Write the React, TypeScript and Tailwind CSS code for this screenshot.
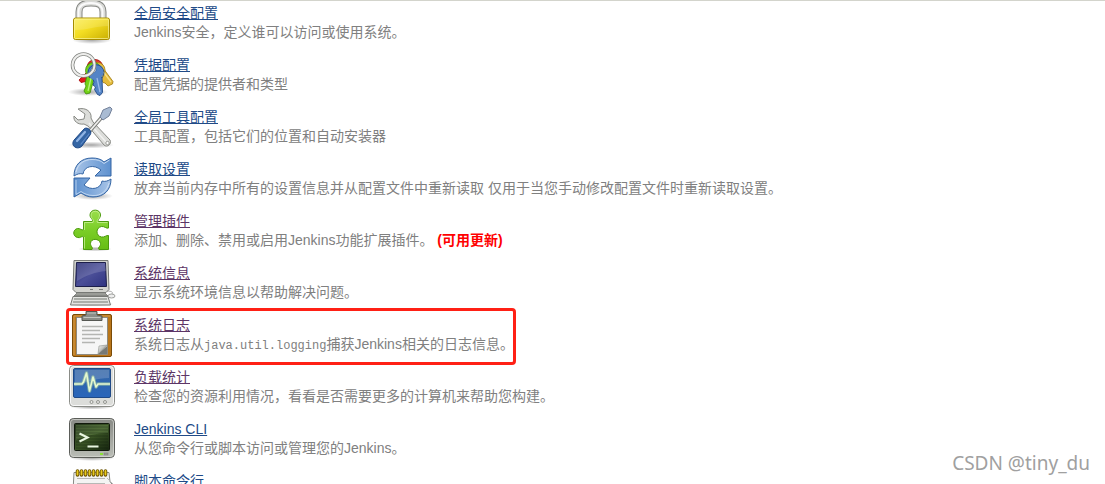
import React from 'react';

interface ManageLink {
  title: string;
  href: string;
  icon: React.ReactNode;
  description?: React.ReactNode;
  visited?: boolean;
  highlighted?: boolean;
}

function Icon({ children }: { children: React.ReactNode }) {
  return (
    <svg viewBox="0 0 48 48" className="size-12 shrink-0" aria-hidden="true">
      {children}
    </svg>
  );
}

function LockIcon() {
  return (
    <Icon>
      <defs>
        <linearGradient id="lockBody" x1="0" y1="0" x2="1" y2="1">
          <stop offset="0" stopColor="#fbee5a" />
          <stop offset="0.45" stopColor="#f3dd22" />
          <stop offset="1" stopColor="#c9ae00" />
        </linearGradient>
        <radialGradient id="shade">
          <stop offset="0" stopColor="#000" stopOpacity="0.35" />
          <stop offset="1" stopColor="#000" stopOpacity="0" />
        </radialGradient>
      </defs>
      <ellipse cx="24" cy="42" rx="20" ry="4" fill="url(#shade)" />
      <path d="M11 23V14C11 7 15 5 23 5s12 2 12 9v9" fill="none" stroke="#858783" strokeWidth="7" />
      <path d="M11 23V14C11 7 15 5 23 5s12 2 12 9v9" fill="none" stroke="#d9dad7" strokeWidth="5" />
      <path d="M10.5 22V14C10.5 8 15 5 23 5s11.500 3 11.500 9v8" fill="none" stroke="#fafafa" strokeWidth="2" />
      <rect x="5.5" y="20" width="36" height="21.500" rx="2" fill="url(#lockBody)" stroke="#a68c00" />
      <rect x="6.5" y="21" width="34" height="19.500" rx="1" fill="none" stroke="#fffbb0" strokeOpacity="0.6" />
      <path d="M7 21h33v7C28 28 20 32 7 32z" fill="#fff" fillOpacity="0.15" />
    </Icon>
  );
}

function KeysIcon() {
  return (
    <Icon>
      <ellipse cx="20" cy="42" rx="20" ry="4" fill="url(#shade)" />
      <path d="M18 23l-7 7 2 2.500 5-1 5-4z" fill="#e01b1b" stroke="#a40000" strokeWidth="0.8" />
      <circle cx="27" cy="17.500" r="8" fill="#e03a2c" stroke="#a40000" strokeWidth="0.8" />
      <path d="M35 18l10 13.500-.500 2.500-4.500 2-3-3-2-.500-5-9z" fill="#e4bb3b" stroke="#a07a10" strokeWidth="0.8" />
      <circle cx="29.500" cy="20" r="7.500" fill="#e9c040" stroke="#a07a10" strokeWidth="0.8" />
      <path d="M35.500 22l7.500 10" stroke="#f8e08a" strokeWidth="1.300" />
      <path d="M19 25l-2 9 1 2-2 5 2 3 4-1 4-14z" fill="#73d216" stroke="#3d8b07" strokeWidth="0.8" />
      <circle cx="25.500" cy="20.500" r="8" fill="#73d216" stroke="#3d8b07" strokeWidth="0.8" />
      <path d="M23 28l-3 13" stroke="#b6f17c" strokeWidth="1.300" />
      <path d="M24 27l2 5-1 3 2.500 2-1 2.500 3 5 2.500 1 2.500-3-.500-15z" fill="#5484c6" stroke="#204a87" strokeWidth="0.9" />
      <circle cx="27.500" cy="22" r="8" fill="#5484c6" />
      <path d="M22 28a8 8 0 1 1 12 0" fill="none" stroke="#204a87" strokeWidth="0.9" />
      <path d="M29 28l3 14" stroke="#9bbbea" strokeWidth="1.300" />
      <circle cx="25.500" cy="20" r="2.500" fill="#fff" stroke="#204a87" strokeWidth="0.6" />
      <circle cx="15.500" cy="15" r="11" fill="none" stroke="#858783" strokeWidth="3.600" />
      <circle cx="15.500" cy="15" r="11" fill="none" stroke="#eeeeec" strokeWidth="1.900" />
    </Icon>
  );
}

function ToolsIcon() {
  return (
    <Icon>
      <ellipse cx="23" cy="43" rx="23" ry="3.500" fill="url(#shade)" />
      <path
        d="M10 7l7 5-1 5-6 1-4-4c-1 5 4 9 10 8l4 2 16 19c3 3 8-1 6-5L25 20l-2-4c1-6-5-11-13-9z"
        fill="#dcddda"
        stroke="#888a85"
        strokeLinejoin="round"
      />
      <path d="M21 21l17 19" stroke="#f2f2f1" strokeWidth="1.500" />
      <circle cx="39.500" cy="41" r="1.700" fill="#fff" stroke="#888a85" strokeWidth="0.8" />
      <path d="M20 31l14-16" stroke="#777975" strokeWidth="3.600" />
      <path d="M20 31l14-16" stroke="#eeeeec" strokeWidth="1.800" />
      <path d="M32 15l3-7 7-3 2 2-3 7-6 4z" fill="#a9bbd3" stroke="#728099" strokeLinejoin="round" />
      <path d="M7 37l9-10c3-3 9 2 6 6l-8 11c-5 5-13-1-7-7z" fill="#3465a4" stroke="#204a87" />
      <path d="M9 39l8-9" stroke="#8fb3e4" strokeWidth="2.200" strokeLinecap="round" />
      <path d="M13 42l8-10" stroke="#5f8bc9" strokeWidth="1.200" strokeLinecap="round" />
    </Icon>
  );
}

function ReloadIcon() {
  return (
    <Icon>
      <defs>
        <linearGradient id="reloadTop" x1="0" y1="0" x2="1" y2="0">
          <stop offset="0" stopColor="#a9c5e8" />
          <stop offset="1" stopColor="#5e91cf" />
        </linearGradient>
        <linearGradient id="reloadBottom" x1="0" y1="0" x2="1" y2="0">
          <stop offset="0" stopColor="#5b8fce" />
          <stop offset="1" stopColor="#a9c5e8" />
        </linearGradient>
      </defs>
      <ellipse cx="25" cy="42" rx="20" ry="4" fill="url(#shade)" />
      <path
        d="M6 22C6 11 13 4 24 4c5 0 9 1 12 4l7-4v18H27l6-6c-7-6-17-4-18 4-3-1-6 0-9 2z"
        fill="url(#reloadTop)"
        stroke="#3465a4"
        strokeLinejoin="round"
      />
      <path d="M8 18C10 9 17 5.500 24 5.500c5 0 9 1 12 4l5.500-3.500" fill="none" stroke="#dbe9f9" strokeOpacity="0.8" />
      <path
        d="M43 25c0 11-7 18-18 18-5 0-9-2-12-4l-7 4V24h16l-6 7c7 6 17 4 18-4 3 1 6 0 9-2z"
        fill="url(#reloadBottom)"
        stroke="#3465a4"
        strokeLinejoin="round"
      />
      <path d="M41 29c-2 8-8 13-16 12.500-5 0-9-2-12-4l-5 3V26" fill="none" stroke="#dbe9f9" strokeOpacity="0.7" />
    </Icon>
  );
}

function PuzzleIcon() {
  return (
    <Icon>
      <defs>
        <linearGradient id="puzzle" x1="0" y1="0" x2="0" y2="1">
          <stop offset="0" stopColor="#9bde4c" />
          <stop offset="0.5" stopColor="#7bce28" />
          <stop offset="1" stopColor="#66bd14" />
        </linearGradient>
      </defs>
      <ellipse cx="27" cy="43" rx="17" ry="2.500" fill="url(#shade)" />
      <path
        d="M15.500 15.500H24c2-2-2-3-2-6.500 0-6.500 10.500-6.500 10.500 0 0 3.500-3.500 4.500-2 6.500h10V22c-2 1-4-2-7-1.500-6 1-6 9.500 0 10.500 3 .500 5-2 7-1.500v14H31c-2-2 2-3 1.500-6-1-5.500-10-5.500-10 0 0 3 3 4 1.500 6h-8.500V31c-2-1.500-3 1.500-6 .500-5-1-5-8 0-9 3-.500 4 2.500 6 1z"
        fill="url(#puzzle)"
        stroke="#4b9a0c"
        strokeLinejoin="round"
      />
      <path
        d="M16.500 24v-7.500H25C27 14 23 13 23 9c0-5 8.500-5 8.500 0 0 4-3.500 5-2 7.500h10M16.500 31v11.500"
        fill="none"
        stroke="#d0f5a0"
        strokeOpacity="0.7"
      />
    </Icon>
  );
}

function ComputerIcon() {
  return (
    <Icon>
      <defs>
        <linearGradient id="pcScreen" x1="0" y1="0" x2="1" y2="1">
          <stop offset="0" stopColor="#262a72" />
          <stop offset="0.5" stopColor="#4b4f98" />
          <stop offset="1" stopColor="#2f3380" />
        </linearGradient>
      </defs>
      <ellipse cx="23" cy="46" rx="23" ry="2.500" fill="url(#shade)" />
      <path d="M38 33c8 0 7 2 5 4" fill="none" stroke="#aaa" />
      <path d="M10 34h26l4 4H6z" fill="#9a9c97" stroke="#666864" strokeWidth="0.7" />
      <path d="M6 2.500h34l1 29-3 3H8l-3-3z" fill="#d3d4cf" stroke="#777975" strokeLinejoin="round" />
      <path d="M8.500 4.500h29l1 24H7.500z" fill="url(#pcScreen)" stroke="#1c1e4a" />
      <path d="M9 5h28l1 8c-11 1-19 4-29 10z" fill="#fff" fillOpacity="0.15" />
      <path d="M22 31.500h3M31 31.500h4" stroke="#7b7d79" />
      <path d="M5 38.500h35l2.500 8.500h-40z" fill="#e3e4e1" stroke="#777975" strokeLinejoin="round" />
      <path d="M6 41h33M5 44h35" stroke="#9b9d98" strokeWidth="1.500" />
      <ellipse cx="43.500" cy="38" rx="3.500" ry="2" fill="#eee" stroke="#888a85" strokeWidth="0.8" />
    </Icon>
  );
}

function ClipboardIcon() {
  return (
    <Icon>
      <defs>
        <linearGradient id="paperCurl" x1="0" y1="0" x2="1" y2="1">
          <stop offset="0" stopColor="#fff" />
          <stop offset="0.5" stopColor="#b5b7b3" />
          <stop offset="1" stopColor="#777975" />
        </linearGradient>
      </defs>
      <ellipse cx="24" cy="46" rx="20" ry="2.500" fill="url(#shade)" />
      <rect x="4.500" y="4.500" width="39" height="42" rx="1.500" fill="#b9761a" stroke="#7a4b07" />
      <path d="M6 45V6h36" fill="none" stroke="#d39c4c" />
      <rect x="8.500" y="7.500" width="31" height="37" fill="#f6f6f6" stroke="#7d7e7a" strokeWidth="0.8" />
      <path d="M39 36l-9 8h9z" fill="#777975" />
      <path d="M30 44l1-8 8-1z" fill="url(#paperCurl)" stroke="#8c8e89" strokeWidth="0.6" />
      <path d="M14 16.500h21M14 20.500h18M14 24.500h21M14 28.500h18M14 32.500h13" stroke="#b4b5b2" strokeWidth="1.500" />
      <path d="M14 10.500V6l4-1V1.500h11V5l5 1v4.500z" fill="#8b8d88" stroke="#555753" strokeLinejoin="round" />
      <path d="M15.500 7.500h17M19 3h9" stroke="#c3c5c0" strokeWidth="1.200" />
    </Icon>
  );
}

function MonitorIcon() {
  return (
    <Icon>
      <defs>
        <linearGradient id="loadScreen" x1="0" y1="0" x2="0" y2="1">
          <stop offset="0" stopColor="#3465a4" />
          <stop offset="1" stopColor="#2a66bb" />
        </linearGradient>
      </defs>
      <ellipse cx="24" cy="45" rx="22" ry="2.500" fill="url(#shade)" />
      <rect x="1.500" y="3.500" width="45" height="41" rx="4" fill="#dcddda" stroke="#8a8c87" />
      <rect x="2.500" y="4.500" width="43" height="39" rx="3" fill="none" stroke="#fff" strokeOpacity="0.8" />
      <rect x="5.500" y="6.500" width="37" height="29" rx="1.500" fill="url(#loadScreen)" stroke="#204a87" />
      <path d="M7 8h34v8c-12 0-22 4-34 8z" fill="#fff" fillOpacity="0.18" />
      <path
        d="M6 22h8l1.500-2 3-9 3 18 3.500-14 3 10 2-3h12"
        fill="none"
        stroke="#b5e0a0"
        strokeOpacity="0.5"
        strokeWidth="3.500"
        strokeLinejoin="round"
      />
      <path d="M6 22h8l1.500-2 3-9 3 18 3.500-14 3 10 2-3h12" fill="none" stroke="#e6f8cf" strokeWidth="1.600" strokeLinejoin="round" />
      <g fill="#e9e9e7" stroke="#8a8c87" strokeWidth="0.9">
        <circle cx="23.500" cy="40" r="1.500" />
        <circle cx="30" cy="40" r="1.500" />
        <circle cx="37" cy="40" r="1.500" />
      </g>
    </Icon>
  );
}

function TerminalIcon() {
  return (
    <Icon>
      <defs>
        <linearGradient id="termScreen" x1="0" y1="0" x2="1" y2="1">
          <stop offset="0" stopColor="#22331a" />
          <stop offset="0.5" stopColor="#3a5425" />
          <stop offset="1" stopColor="#172610" />
        </linearGradient>
        <linearGradient id="termCase" x1="0" y1="0" x2="0" y2="1">
          <stop offset="0" stopColor="#888a85" />
          <stop offset="1" stopColor="#babdb6" />
        </linearGradient>
      </defs>
      <ellipse cx="24" cy="44" rx="23" ry="3" fill="url(#shade)" />
      <rect x="1.500" y="4.500" width="45" height="39" rx="4" fill="url(#termCase)" stroke="#5b5d59" />
      <rect x="2.500" y="5.500" width="43" height="37" rx="3" fill="none" stroke="#d3d5cf" strokeOpacity="0.8" />
      <rect x="6.500" y="9.500" width="35" height="27" rx="1" fill="url(#termScreen)" stroke="#11180c" />
      <path d="M8 11h32v8c-12 0-22 3-32 7z" fill="#c4e89a" fillOpacity="0.18" />
      <path d="M8 13h32M8 16h32M8 19h32M8 22h32M8 25h32M8 28h32M8 31h32M8 34h32" stroke="#0b1306" strokeOpacity="0.3" />
      <path d="M11.500 19.500l8 4-8 4M19.500 32.500h11" fill="none" stroke="#e9f6e1" strokeWidth="2.200" />
      <rect x="32" y="39" width="3" height="2" fill="#8ae234" />
      <rect x="36" y="39" width="4" height="2" fill="#9a9c97" stroke="#777975" strokeWidth="0.5" />
    </Icon>
  );
}

function NotepadIcon() {
  return (
    <Icon>
      <path d="M6 6.500h35l1 9 3 4v26H4z" fill="#f4f4f3" stroke="#888a85" />
      <path d="M39 12l7 7" stroke="#bbb" />
      <path d="M9 12.500h28M9 17.500h28M9 21.500h28" stroke="#b7b8b5" />
      <path
        d="M9.500 5v4M13.500 5v4M17.500 5v4M21.500 5v4M25.500 5v4M29.500 5v4M33.500 5v4M37.500 5v4"
        stroke="#6b5300"
        strokeWidth="3.600"
        strokeLinecap="round"
      />
      <path
        d="M9.500 5v3.500M13.500 5v3.500M17.500 5v3.500M21.500 5v3.500M25.500 5v3.500M29.500 5v3.500M33.500 5v3.500M37.500 5v3.500"
        stroke="#e8c91a"
        strokeWidth="1.800"
        strokeLinecap="round"
      />
    </Icon>
  );
}

const links: ManageLink[] = [
  { title: '全局安全配置', href: '#configureSecurity', icon: <LockIcon />, description: 'Jenkins安全，定义谁可以访问或使用系统。' },
  { title: '凭据配置', href: '#configureCredentials', icon: <KeysIcon />, description: '配置凭据的提供者和类型' },
  { title: '全局工具配置', href: '#configureTools', icon: <ToolsIcon />, description: '工具配置，包括它们的位置和自动安装器' },
  {
    title: '读取设置',
    href: '#reload',
    icon: <ReloadIcon />,
    description: '放弃当前内存中所有的设置信息并从配置文件中重新读取 仅用于当您手动修改配置文件时重新读取设置。',
  },
  {
    title: '管理插件',
    href: '#pluginManager',
    icon: <PuzzleIcon />,
    visited: true,
    description: (
      <>
        添加、删除、禁用或启用Jenkins功能扩展插件。 <strong className="font-bold text-[#ff0000]">(可用更新)</strong>
      </>
    ),
  },
  { title: '系统信息', href: '#systemInfo', icon: <ComputerIcon />, visited: true, description: '显示系统环境信息以帮助解决问题。' },
  {
    title: '系统日志',
    href: '#log',
    icon: <ClipboardIcon />,
    visited: true,
    highlighted: true,
    description: (
      <>
        系统日志从<code className="font-['Liberation_Mono',monospace] text-xs leading-none">java.util.logging</code>
        捕获Jenkins相关的日志信息。
      </>
    ),
  },
  {
    title: '负载统计',
    href: '#load-statistics',
    icon: <MonitorIcon />,
    visited: true,
    description: '检查您的资源利用情况，看看是否需要更多的计算机来帮助您构建。',
  },
  { title: 'Jenkins CLI', href: '#cli', icon: <TerminalIcon />, description: '从您命令行或脚本访问或管理您的Jenkins。' },
  { title: '脚本命令行', href: '#script', icon: <NotepadIcon /> },
];

function ManageRow({ link }: { link: ManageLink }) {
  return (
    <li className="relative flex h-[52px] w-fit gap-[18px] pt-px">
      {link.icon}
      <div className="pt-1.5 text-sm leading-[19px]">
        <a href={link.href} className={link.visited ? 'text-[#5c3566] underline' : 'text-[#204a87] underline'}>
          {link.title}
        </a>
        {link.description && <p className="text-[#808080]">{link.description}</p>}
      </div>
      {link.highlighted && (
        <div className="pointer-events-none absolute -inset-x-0.5 -top-px -bottom-1 rounded-sm border-3 border-[#ff2015]" />
      )}
    </li>
  );
}

export default function App() {
  return (
    <main
      lang="zh-CN"
      className="relative h-screen overflow-hidden border-t border-[#d3d4cc] bg-white font-['Liberation_Sans','Noto_Sans_CJK_SC',sans-serif]"
    >
      <ul className="-mt-1 pl-[68px]">
        {links.map((link) => (
          <ManageRow key={link.href} link={link} />
        ))}
      </ul>
      <span className="absolute right-[15px] bottom-2 font-['Noto_Sans',sans-serif] text-[19px] leading-[26px] text-[#a0a0a0]">
        CSDN @tiny_du
      </span>
    </main>
  );
}
